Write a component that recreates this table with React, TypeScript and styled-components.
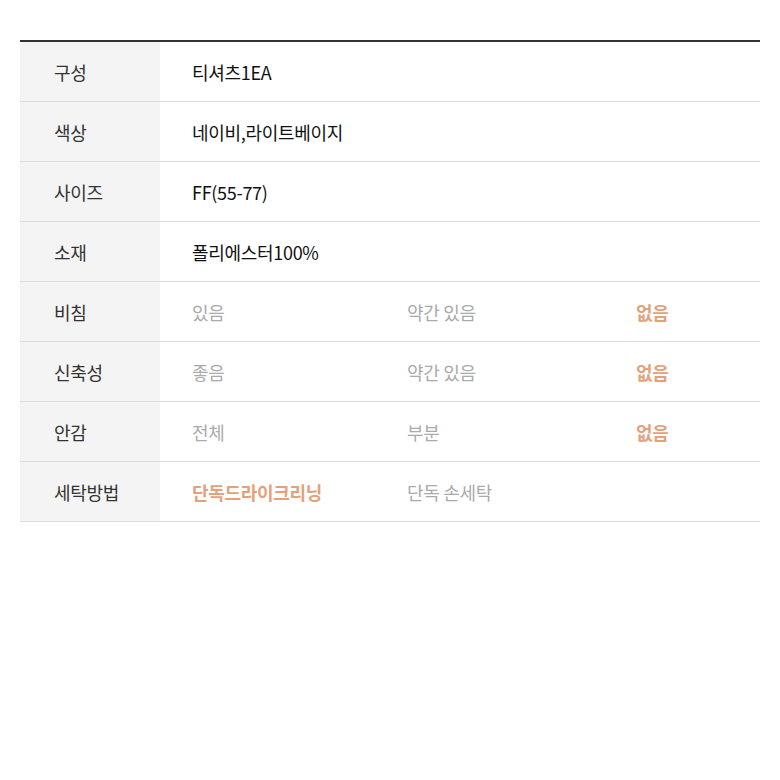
import React from 'react';
import styled, { createGlobalStyle } from 'styled-components';

const GlobalStyle = createGlobalStyle`
  body {
    margin: 0;
    background: #fff;
    font-family: "Noto Sans CJK KR", "Noto Sans", sans-serif;
  }
  * {
    box-sizing: border-box;
  }
`;

const Wrap = styled.div`
  padding: 40px 20px;
`;

const Table = styled.div`
  border-top: 2px solid #333;
`;

const Row = styled.div`
  display: grid;
  grid-template-columns: 140px 1fr;
  height: 60px;
  border-bottom: 1px solid #ddd;
`;

const Label = styled.div`
  display: flex;
  align-items: center;
  padding-left: 34px;
  background: #f4f4f4;
  font-size: 18px;
  color: #333;
  letter-spacing: -0.3px;
`;

const Value = styled.div`
  display: flex;
  align-items: center;
  padding-left: 32px;
  font-size: 18px;
  color: #111;
  letter-spacing: -0.3px;
`;

const Options = styled.div`
  display: grid;
  grid-template-columns: 215px 229px 1fr;
  align-items: center;
  padding-left: 32px;
`;

const Option = styled.span<{ $on?: boolean }>`
  font-size: 18px;
  letter-spacing: -0.3px;
  color: ${(p) => (p.$on ? '#e3a27c' : '#aaa')};
  font-weight: ${(p) => (p.$on ? 700 : 400)};
`;

type Spec = { label: string; value?: string; options?: string[]; on?: number };

const specs: Spec[] = [
  { label: '구성', value: '티셔츠1EA' },
  { label: '색상', value: '네이비,라이트베이지' },
  { label: '사이즈', value: 'FF(55-77)' },
  { label: '소재', value: '폴리에스터100%' },
  { label: '비침', options: ['있음', '약간 있음', '없음'], on: 2 },
  { label: '신축성', options: ['좋음', '약간 있음', '없음'], on: 2 },
  { label: '안감', options: ['전체', '부분', '없음'], on: 2 },
  { label: '세탁방법', options: ['단독드라이크리닝', '단독 손세탁'], on: 0 },
];

const App = () => {
  return (
    <Wrap>
      <GlobalStyle />
      <Table>
        {specs.map((s) => (
          <Row key={s.label}>
            <Label>{s.label}</Label>
            {s.options ? (
              <Options>
                {s.options.map((o, i) => (
                  <Option key={o} $on={i === s.on}>
                    {o}
                  </Option>
                ))}
              </Options>
            ) : (
              <Value>{s.value}</Value>
            )}
          </Row>
        ))}
      </Table>
    </Wrap>
  );
};

export default App;
